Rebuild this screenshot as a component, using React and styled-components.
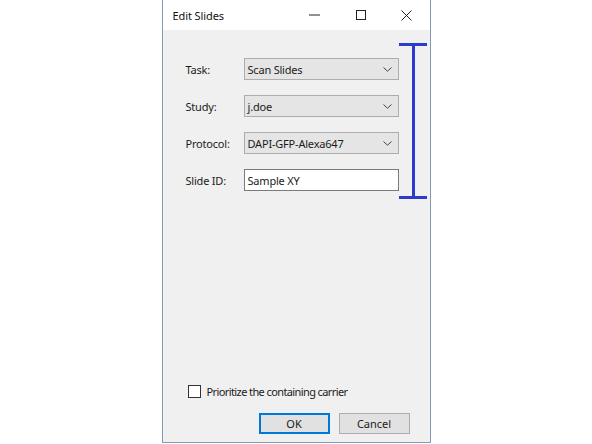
import React from "react"
import styled, { createGlobalStyle } from "styled-components"

const GlobalStyle = createGlobalStyle`
  html, body {
    margin: 0;
    padding: 0;
    background: #ffffff;
  }
  body {
    font-family: "Noto Sans", "Open Sans", "Liberation Sans", sans-serif;
    color: #1b1b1b;
  }
`

const Page = styled.div`
  position: relative;
  width: 592px;
  height: 444px;
  display: flex;
  justify-content: center;
  overflow: hidden;
`

const Window = styled.div`
  width: 267px;
  height: 442px;
  display: flex;
  flex-direction: column;
  border: 1px solid #7f9bb6;
  border-top: none;
  background: #f0f0f0;
`

const TitleBar = styled.div`
  height: 30px;
  flex-shrink: 0;
  display: flex;
  align-items: center;
  background: #ffffff;
  padding-left: 10px;
`

const Title = styled.div`
  flex: 1;
  font-size: 11px;
  color: #111;
  letter-spacing: -0.1px;
`

const CaptionButton = styled.div`
  width: 46px;
  height: 30px;
  display: flex;
  align-items: center;
  justify-content: center;
`

const Body = styled.div`
  flex: 1;
  display: flex;
  flex-direction: column;
  padding: 28px 31px 8px 23px;
`

const Form = styled.div`
  display: flex;
  flex-direction: column;
  gap: 15px;
`

const Row = styled.div`
  display: flex;
  align-items: center;
  height: 22px;
`

const Label = styled.div`
  width: 58px;
  font-size: 11px;
  letter-spacing: -0.2px;
`

const Combo = styled.div`
  flex: 1;
  height: 22px;
  box-sizing: border-box;
  display: flex;
  align-items: center;
  justify-content: space-between;
  padding: 0 6px 0 3px;
  font-size: 11px;
  letter-spacing: -0.2px;
  background: ${p => (p.$input ? "#ffffff" : "#e5e5e5")};
  border: 1px solid ${p => (p.$input ? "#7a7a7a" : "#adadad")};
`

const Spacer = styled.div`
  flex: 1;
`

const CheckRow = styled.div`
  display: flex;
  align-items: center;
  gap: 6px;
  padding-left: 2px;
  font-size: 11px;
  letter-spacing: -0.6px;
`

const CheckBox = styled.div`
  width: 13px;
  height: 13px;
  box-sizing: border-box;
  border: 1px solid #333;
  background: #fff;
`

const Buttons = styled.div`
  display: flex;
  justify-content: flex-end;
  gap: 9px;
  margin-top: 14px;
  margin-right: -11px;
`

const Button = styled.div`
  width: 71px;
  height: 21px;
  box-sizing: border-box;
  display: flex;
  align-items: center;
  justify-content: center;
  font-size: 11px;
  background: #e1e1e1;
  border: ${p => (p.$default ? "2px solid #0078d7" : "1px solid #adadad")};
`

const Bracket = styled.div`
  position: absolute;
  left: 399px;
  top: 43px;
  width: 28px;
  height: 156px;
  display: flex;
  flex-direction: column;
  align-items: center;
`

const BracketBar = styled.div`
  width: 28px;
  height: 3px;
  background: #2a3ccc;
`

const BracketStem = styled.div`
  flex: 1;
  width: 3px;
  background: #2a3ccc;
`

const Chevron = () => (
  <svg width="9" height="5" viewBox="0 0 9 5">
    <path d="M0.5 0.5 L4.5 4.2 L8.5 0.5" fill="none" stroke="#444" strokeWidth="1" />
  </svg>
)

const fields = [
  { label: "Task:", value: "Scan Slides" },
  { label: "Study:", value: "j.doe" },
  { label: "Protocol:", value: "DAPI-GFP-Alexa647" },
  { label: "Slide ID:", value: "Sample XY", input: true },
]

export default function App() {
  return (
    <>
      <GlobalStyle />
      <Page>
        <Window>
          <TitleBar>
            <Title>Edit Slides</Title>
            <CaptionButton>
              <svg width="11" height="2" viewBox="0 0 11 2">
                <line x1="0" y1="1" x2="11" y2="1" stroke="#222" strokeWidth="1" />
              </svg>
            </CaptionButton>
            <CaptionButton>
              <svg width="10" height="10" viewBox="0 0 10 10">
                <rect x="0.5" y="0.5" width="9" height="9" fill="none" stroke="#222" strokeWidth="1" />
              </svg>
            </CaptionButton>
            <CaptionButton>
              <svg width="11" height="11" viewBox="0 0 11 11">
                <path d="M0.5 0.5 L10.5 10.5 M10.5 0.5 L0.5 10.5" stroke="#222" strokeWidth="1" />
              </svg>
            </CaptionButton>
          </TitleBar>
          <Body>
            <Form>
              {fields.map(f => (
                <Row key={f.label}>
                  <Label>{f.label}</Label>
                  <Combo $input={f.input}>
                    <span>{f.value}</span>
                    {!f.input && <Chevron />}
                  </Combo>
                </Row>
              ))}
            </Form>
            <Spacer />
            <CheckRow>
              <CheckBox />
              <span>Prioritize the containing carrier</span>
            </CheckRow>
            <Buttons>
              <Button $default>OK</Button>
              <Button>Cancel</Button>
            </Buttons>
          </Body>
        </Window>
        <Bracket>
          <BracketBar />
          <BracketStem />
          <BracketBar />
        </Bracket>
      </Page>
    </>
  )
}
